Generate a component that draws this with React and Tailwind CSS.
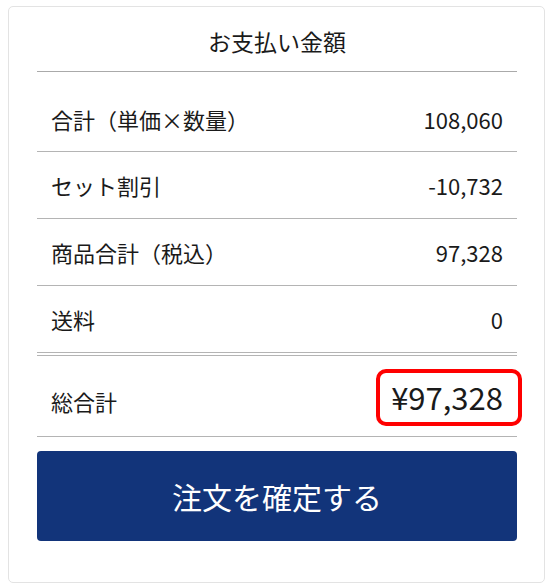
export default function App() {
  const font = { fontFamily: '"Noto Sans CJK JP", "Noto Sans", sans-serif' };
  return (
    <div className="w-[550px] h-[588px] bg-white" style={font}>
      <div className="absolute left-[8px] top-[6px] w-[537px] h-[577px] rounded-[5px] border border-[#e3e3e3] bg-white pl-[28px] pr-[27px]">
        <div className="h-[65px] border-b border-[#aaaaaa] flex items-center justify-center pt-[14px] pb-[10px] text-[23px] text-[#1a1a1a]">
          お支払い金額
        </div>
        <div className="h-[80px] pt-[15px] border-b border-[#b4b4b4] flex items-center justify-between px-[14px] text-[22px] text-[#1a1a1a]">
          <span>合計（単価×数量）</span>
          <span>108,060</span>
        </div>
        <div className="h-[67px] border-b border-[#b4b4b4] flex items-center justify-between px-[14px] text-[22px] text-[#1a1a1a]">
          <span>セット割引</span>
          <span>-10,732</span>
        </div>
        <div className="h-[67px] border-b border-[#b4b4b4] flex items-center justify-between px-[14px] text-[22px] text-[#1a1a1a]">
          <span>商品合計（税込）</span>
          <span>97,328</span>
        </div>
        <div className="h-[66px] flex items-center justify-between px-[14px] text-[22px] text-[#1a1a1a]">
          <span>送料</span>
          <span>0</span>
        </div>
        <div className="h-[4px] border-t border-b border-[#b4b4b4]" />
        <div className="h-[81px] border-b border-[#b4b4b4] flex items-center justify-between px-[14px] text-[#1a1a1a]">
          <span className="text-[22px] mt-[10px]">総合計</span>
          <span className="relative text-[31px] leading-none">
            ¥97,328
            <span className="absolute left-[-15px] right-[-19px] top-[-12px] bottom-[-14px] rounded-[10px] border-[4px] border-[#ff0000]" />
          </span>
        </div>
        <button className="mt-[14px] w-full h-[90px] rounded-[4px] bg-[#12347a] text-white text-[30px] flex items-center justify-center" style={font}>
          注文を確定する
        </button>
      </div>
    </div>
  );
}
